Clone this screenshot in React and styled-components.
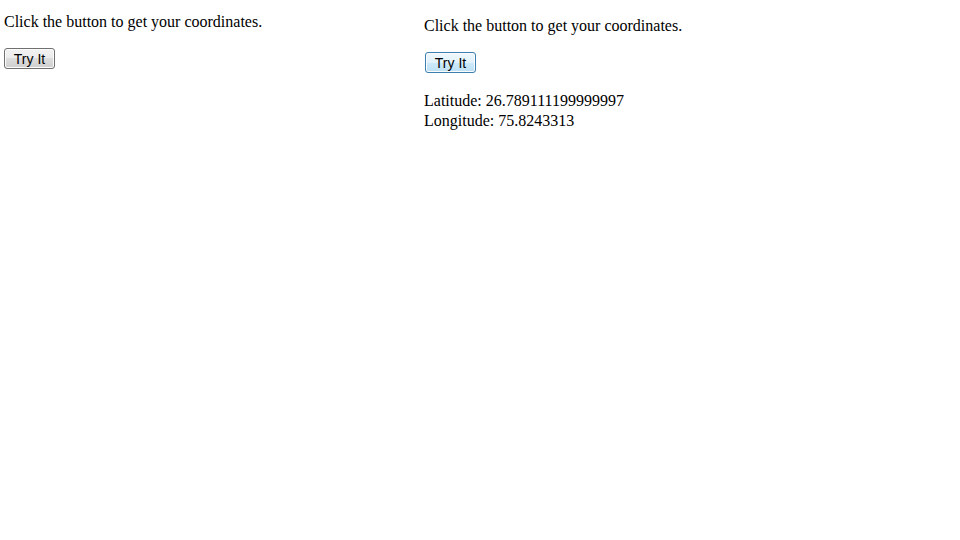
import styled, { createGlobalStyle, css } from "styled-components";

const GlobalStyle = createGlobalStyle`
    html, body {
        margin: 0;
        padding: 0;
        background: #ffffff;
    }
    body {
        font-family: "Liberation Serif", "Times New Roman", serif;
        font-size: 16px;
        color: #000000;
    }
`;

const Page = styled.div`
    display: grid;
    grid-template-columns: 420px 1fr;
    width: 960px;
    height: 540px;
`;

const Panel = styled.div`
    display: flex;
    flex-direction: column;
    align-items: flex-start;
    padding: ${(p) => p.$top}px 0 0 ${(p) => p.$left}px;
`;

const Text = styled.p`
    margin: 0;
    line-height: 20px;
`;

const Button = styled.button`
    width: 51px;
    height: 21px;
    margin: ${(p) => p.$gap}px 0 0 ${(p) => p.$shift}px;
    padding: 1px 0 0;
    font-family: "Liberation Sans", Arial, sans-serif;
    font-size: 14px;
    line-height: 16px;
    color: #000000;
    border: 1px solid #707070;
    border-radius: 3px;
    background: linear-gradient(#f2f2f2 0%, #ebebeb 50%, #dddddd 50%, #cfcfcf 100%);
    box-shadow: inset 0 0 0 1px #fcfcfc;
    cursor: default;

    ${(p) =>
        p.$hover &&
        css`
            border-color: #3c7fb1;
            background: linear-gradient(#eef7fd 0%, #e2f2fc 50%, #cdeafb 50%, #bde0f5 100%);
        `}
`;

const Result = styled.div`
    margin-top: 18px;
`;

function App() {
    return (
        <>
            <GlobalStyle />
            <Page>
                <Panel $top={12} $left={4}>
                    <Text>Click the button to get your coordinates.</Text>
                    <Button $gap={16} $shift={0}>Try It</Button>
                </Panel>
                <Panel $top={16} $left={4}>
                    <Text>Click the button to get your coordinates.</Text>
                    <Button $gap={16} $shift={1} $hover>Try It</Button>
                    <Result>
                        <Text>Latitude: 26.789111199999997</Text>
                        <Text>Longitude: 75.8243313</Text>
                    </Result>
                </Panel>
            </Page>
        </>
    );
}

export default App;
